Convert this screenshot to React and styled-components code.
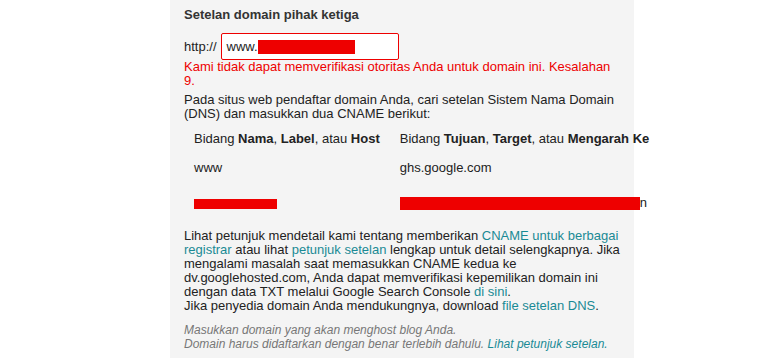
import React from 'react';
import styled, { createGlobalStyle } from 'styled-components';

const GlobalStyle = createGlobalStyle`
  html, body {
    margin: 0;
    padding: 0;
    background: #fff;
  }
  body {
    font-family: "Liberation Sans", Arial, sans-serif;
    font-size: 13px;
    color: #222;
  }
`;

const Panel = styled.div`
  margin-left: 170px;
  min-height: 358px;
  box-sizing: border-box;
  width: 464px;
  padding: 7px 14px 0;
  background: #f4f4f4;
  line-height: 14px;
`;

const Title = styled.div`
  font-weight: bold;
  color: #333;
  line-height: 15px;
`;

const UrlRow = styled.div`
  display: flex;
  align-items: center;
  gap: 4px;
  margin-top: 11px;
`;

const UrlInput = styled.div`
  display: flex;
  align-items: center;
  width: 178px;
  height: 27px;
  box-sizing: border-box;
  padding: 0 5px;
  background: #fff;
  border: 1px solid #e00;
  border-radius: 2px;
`;

const Redacted = styled.span`
  display: inline-block;
  width: ${p => p.$w}px;
  height: ${p => p.$h}px;
  background: #ee0000;
  vertical-align: middle;
`;

const ErrorText = styled.p`
  margin: 0;
  color: #e00;
`;

const Para = styled.p`
  margin: ${p => p.$top || 0}px 0 0;
`;

const Table = styled.table`
  border-collapse: collapse;
  margin-top: 4px;
  white-space: nowrap;
`;

const Cell = styled.td`
  padding: ${p => (p.$tall ? '13px 10px 15px' : '7px 10px 8px')};
  vertical-align: middle;
`;

const Link = styled.a`
  color: #1a8a94;
  text-decoration: none;
`;

const Note = styled.p`
  margin: 10px 0 0;
  font-size: 12px;
  font-style: italic;
  color: #777;
`;

export default function App() {
  return (
    <>
      <GlobalStyle />
      <Panel>
        <Title>Setelan domain pihak ketiga</Title>
        <UrlRow>
          <span>http://</span>
          <UrlInput>
            www.<Redacted $w={97} $h={14} />
          </UrlInput>
        </UrlRow>
        <ErrorText>
          Kami tidak dapat memverifikasi otoritas Anda untuk domain ini. Kesalahan 9.
        </ErrorText>
        <Para $top={5}>
          Pada situs web pendaftar domain Anda, cari setelan Sistem Nama Domain (DNS) dan
          masukkan dua CNAME berikut:
        </Para>
        <Table>
          <tbody>
            <tr>
              <Cell>
                Bidang <b>Nama</b>, <b>Label</b>, atau <b>Host</b>
              </Cell>
              <Cell>
                Bidang <b>Tujuan</b>, <b>Target</b>, atau <b>Mengarah Ke</b>
              </Cell>
            </tr>
            <tr>
              <Cell>www</Cell>
              <Cell>ghs.google.com</Cell>
            </tr>
            <tr>
              <Cell $tall>
                <Redacted $w={83} $h={10} />
              </Cell>
              <Cell $tall>
                <Redacted $w={240} $h={13} />n
              </Cell>
            </tr>
          </tbody>
        </Table>
        <Para $top={4}>
          Lihat petunjuk mendetail kami tentang memberikan{' '}
          <Link href="#">CNAME untuk berbagai registrar</Link> atau lihat{' '}
          <Link href="#">petunjuk setelan</Link> lengkap untuk detail selengkapnya. Jika
          mengalami masalah saat memasukkan CNAME kedua ke
          <br />
          dv.googlehosted.com, Anda dapat memverifikasi kepemilikan domain ini dengan data
          TXT melalui Google Search Console <Link href="#">di sini</Link>.
          <br />
          Jika penyedia domain Anda mendukungnya, download{' '}
          <Link href="#">file setelan DNS</Link>.
        </Para>
        <Note>
          Masukkan domain yang akan menghost blog Anda.
          <br />
          Domain harus didaftarkan dengan benar terlebih dahulu.{' '}
          <Link href="#">Lihat petunjuk setelan.</Link>
        </Note>
      </Panel>
    </>
  );
}
